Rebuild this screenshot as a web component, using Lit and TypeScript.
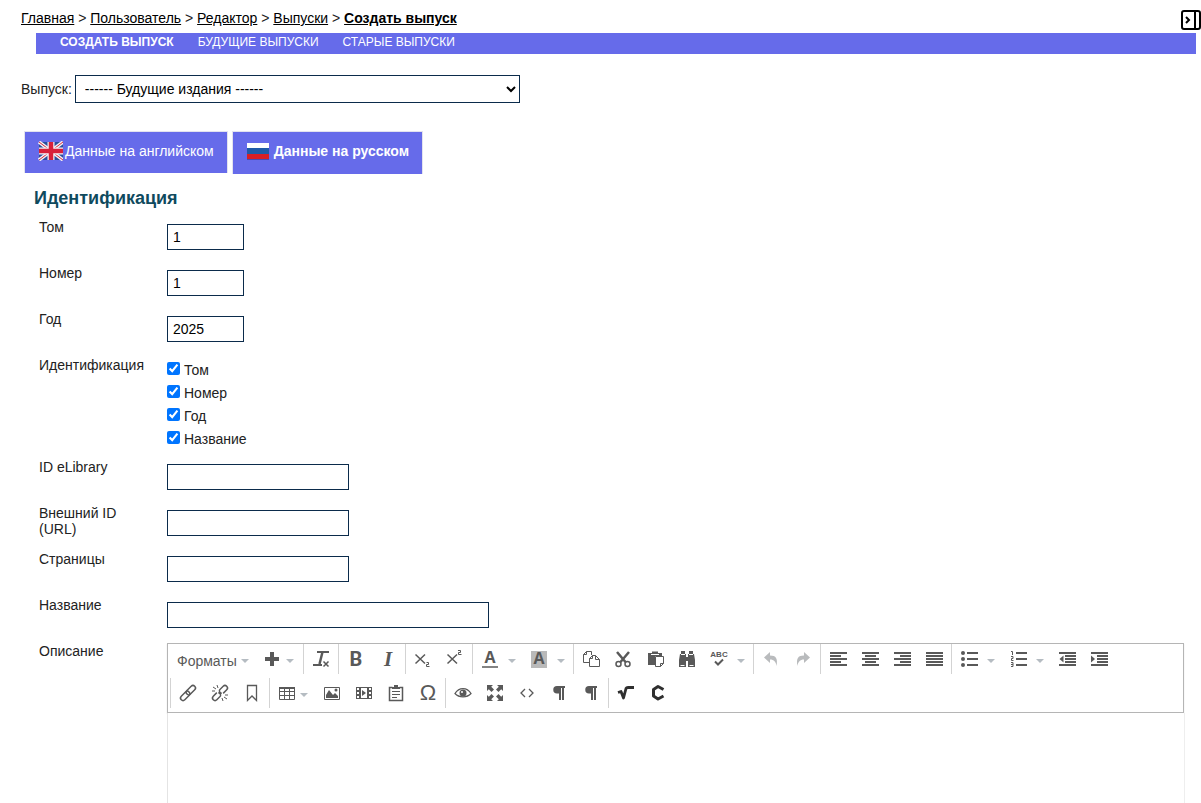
import { LitElement, html, svg, css, nothing } from "lit";
import type { SVGTemplateResult } from "lit";
import { customElement, property } from "lit/decorators.js";
import { classMap } from "lit/directives/class-map.js";

const bars = (rows: number[][]) =>
  rows.map(([x, y, w]) => svg`<rect x=${x} y=${y} width=${w} height="2" />`);

const PILCROW = svg`<path d="M7 2h8v2h-1v12h-2V4h-1v12H9V9.500H7A3.750 3.750 0 0 1 7 2z" />`;

// Every icon is drawn on an 18 × 18 grid.
const ICONS: Record<string, SVGTemplateResult> = {
  plus: svg`<path d="M7 2h4v5h5v4h-5v5H7v-5H2V7h5z" transform="translate(-1 0)" />`,
  clear: svg`<path d="M5 1h12v2H5z" /><path d="M10.500 2L7.500 14" class="s25" /><path d="M1 14h9v2H1z" /><path d="M11.500 11.500l5 5M16.500 11.500l-5 5" class="s15" />`,
  bold: svg`<text x="9" y="16" class="rb" text-anchor="middle">B</text>`,
  italic: svg`<text x="9" y="16" class="it" text-anchor="middle">I</text>`,
  sub: svg`<path d="M1.500 4.500l9.500 9M11 4.500l-9.500 9" class="s15" /><path d="M12.500 12.500h2v2h-2v2h3" class="s1" />`,
  sup: svg`<path d="M1.500 4.500l9.500 9M11 4.500l-9.500 9" class="s15" /><path d="M12 0.500h2.500v2h-2v2h3" class="s1" />`,
  color: svg`<text x="9" y="13" class="a" text-anchor="middle">A</text><rect x="1" y="16" width="16" height="2" opacity=".75" />`,
  back: svg`<rect x="1" y="1" width="16" height="17" fill="#b9b9b9" /><text x="9" y="14" class="a" text-anchor="middle">A</text>`,
  copy: svg`<path d="M7 12.500H1.500V4.500L4.500 1.500H9.500V5M1.500 4.500H4.500V1.500M7.500 8.500L10.500 5.500H13.500L17.500 9.500V16.500H7.500ZM7.500 8.500H10.500V5.500M13.500 5.500v4h4" class="s1" />`,
  cut: svg`<path d="M3 2l8.500 10M15 2L6.500 12" class="s25" /><circle cx="4.500" cy="14" r="2.500" class="s15" /><circle cx="13.500" cy="14" r="2.500" class="s15" />`,
  paste: svg`<path d="M2 3h4V1.500h6V3h4v3H9v9H2z" /><path d="M5 4.500h8" stroke="#fff" /><path d="M9.500 6.500h8v7l-3 3h-5zM14.500 16.500v-3h3" fill="#fff" stroke="#595959" />`,
  find: svg`<path d="M3 1h4v3h1v3h2V4h1V1h4v3h1l1 6v7h-7v-6H8v6H1v-7l1-6h1z" /><path d="M2.500 15.500h4M11.500 15.500h4M3 4.500h4M11 4.500h4" stroke="#fff" />`,
  spell: svg`<text x="9" y="7" class="abc" text-anchor="middle">ABC</text><path d="M5 11.500l3 3 5-5" class="s2" />`,
  undo: svg`<path d="M2 7.500L8 2v3.500c6 0 8 3 6.500 10.500C14 12 12 9.500 8 9.500V13z" fill="#b9bbbd" />`,
  redo: svg`<path d="M16 7.500L10 2v3.500c-6 0-8 3-6.500 10.500C4 12 6 9.500 10 9.500V13z" fill="#b9bbbd" />`,
  left: svg`${bars([[1, 2, 17], [1, 5, 11], [1, 8, 17], [1, 11, 11], [1, 14, 17]])}`,
  center: svg`${bars([[1, 2, 17], [4, 5, 11], [1, 8, 17], [4, 11, 11], [1, 14, 17]])}`,
  right: svg`${bars([[1, 2, 17], [7, 5, 11], [1, 8, 17], [7, 11, 11], [1, 14, 17]])}`,
  justify: svg`${bars([[1, 2, 17], [1, 5, 17], [1, 8, 17], [1, 11, 17], [1, 14, 17]])}`,
  bullets: svg`${bars([[7, 2, 11], [7, 8, 11], [7, 14, 11]])}<circle cx="3" cy="3" r="2" /><circle cx="3" cy="9" r="2" /><circle cx="3" cy="15" r="2" />`,
  numbers: svg`${bars([[7, 2, 11], [7, 8, 11], [7, 14, 11]])}<path d="M2 1.500h1.500V5M2 6.500h2v2H2.500v2H4.500M2 12.500h2v4H2M2 14.500h2" class="s1" />`,
  outdent: svg`${bars([[1, 2, 17], [7, 5, 11], [7, 8, 11], [7, 11, 11], [1, 14, 17]])}<path d="M5.500 5.500v7L1.500 9z" />`,
  indent: svg`${bars([[1, 2, 17], [7, 5, 11], [7, 8, 11], [7, 11, 11], [1, 14, 17]])}<path d="M1 5.500v7L5 9z" />`,
  link: svg`<g transform="rotate(-45 9 9)"><rect x="-0.500" y="6.500" width="11" height="5" rx="2.500" class="s15" /><rect x="7.500" y="6.500" width="11" height="5" rx="2.500" class="s15" /></g>`,
  unlink: svg`<g transform="rotate(-45 9 9)"><path d="M7 6.500H2A2.500 2.500 0 0 0 2 11.500H7A2.500 2.500 0 0 0 8 7.500M11 11.500h5A2.500 2.500 0 0 0 16 6.500H11A2.500 2.500 0 0 0 10 10.500" class="s15" /></g><path d="M2 3l3 2M6 1l1 3M1 7h3M16 15l-3-2M12 17l-1-3M17 11h-3" class="s1" />`,
  bookmark: svg`<path d="M4.500 1.500h9v15L9 12l-4.500 4.500z" class="s13" />`,
  table: svg`<path d="M1.500 3.500h15v12h-15zM1.500 7.500h15M1.500 11.500h15M6.500 3.500v12M11.500 3.500v12" class="s1" /><rect x="1" y="3" width="16" height="2" />`,
  image: svg`<path d="M1.500 3.500h15v12h-15z" class="s1" /><path d="M3 14v-3l3-5 4 5 2-2 3 3v2z" /><circle cx="13" cy="6" r="1.500" />`,
  media: svg`<path d="M1 3h16v12H1z" /><path d="M6 4h6v10H6z" fill="#fff" /><path d="M2 4h2v2H2zM2 8h2v2H2zM2 12h2v2H2zM14 4h2v2h-2zM14 8h2v2h-2zM14 12h2v2h-2z" fill="#fff" /><path d="M7 6v6l4-3z" />`,
  template: svg`<path d="M5.500 3.500h-3v13h13v-13h-3" class="s15" /><path d="M5 5V3h2V1h4v2h2v2zM5 7h8v1H5zM5 10h8v1H5zM5 13h5v1H5z" />`,
  omega: svg`<text x="9" y="16" class="om" text-anchor="middle">Ω</text>`,
  eye: svg`<path d="M1 9.500C5 3 13 3 17 9.500 13 14 5 14 1 9.500z" class="s13" /><circle cx="9" cy="9" r="3.500" /><circle cx="8" cy="8" r="1" fill="#fff" />`,
  full: svg`<path d="M1 1h6L5.200 2.800 8 5.500 5.500 8 2.800 5.200 1 7zM17 1v6l-1.800-1.800L12.500 8 10 5.500l2.800-2.700L11 1zM1 17v-6l1.800 1.800L5.500 10 8 12.500l-2.800 2.700L7 17zM17 17h-6l1.800-1.800L10 12.500l2.500-2.500 2.700 2.800L17 11z" />`,
  code: svg`<path d="M7 5L3 9l4 4M11 5l4 4-4 4" class="s13" />`,
  ltr: PILCROW,
  rtl: PILCROW,
  math: svg`<path d="M1 8.500l3-1L6.500 14 9 4.500Q9.500 3.500 11 3.500H17" fill="none" stroke="#2f2f2f" stroke-width="2.800" stroke-linejoin="round" />`,
  chem: svg`<path d="M14.500 5.500L9 2.500 4.500 5.500v6.500l4.500 3 5.500-3" fill="none" stroke="#2f2f2f" stroke-width="3" stroke-linejoin="round" />`,
};

interface Tool { icon: string; label: string; text?: string; menu?: boolean; wide?: boolean; disabled?: boolean }
const t = (icon: string, label: string, extra: Partial<Tool> = {}): Tool => ({ icon, label, ...extra });
const MENU = { menu: true };
const SPLIT = { menu: true, wide: true };
const OFF = { disabled: true };

const TOOLBARS: Tool[][][] = [
  [
    [t("", "Форматы", { text: "Форматы", menu: true }), t("plus", "Вставить", MENU)],
    [t("clear", "Очистить формат")],
    [t("bold", "Полужирный"), t("italic", "Курсив")],
    [t("sub", "Нижний индекс"), t("sup", "Верхний индекс")],
    [t("color", "Цвет текста", SPLIT), t("back", "Цвет фона", SPLIT)],
    [t("copy", "Копировать"), t("cut", "Вырезать"), t("paste", "Вставить"), t("find", "Найти и заменить"), t("spell", "Проверка орфографии", SPLIT)],
    [t("undo", "Отменить", OFF), t("redo", "Вернуть", OFF)],
    [t("left", "По левому краю"), t("center", "По центру"), t("right", "По правому краю"), t("justify", "По ширине")],
    [t("bullets", "Маркированный список", SPLIT), t("numbers", "Нумерованный список", SPLIT), t("outdent", "Уменьшить отступ"), t("indent", "Увеличить отступ")],
  ],
  [
    [t("link", "Ссылка"), t("unlink", "Удалить ссылку"), t("bookmark", "Якорь")],
    [t("table", "Таблица", MENU), t("image", "Изображение"), t("media", "Видео"), t("template", "Шаблон"), t("omega", "Специальные символы")],
    [t("eye", "Предпросмотр"), t("full", "Полноэкранный режим"), t("code", "Исходный код"), t("ltr", "Слева направо"), t("rtl", "Справа налево")],
    [t("math", "Формула"), t("chem", "Химическая формула")],
  ],
];

@customElement("text-editor")
class TextEditor extends LitElement {
  static styles = css`
    :host { display: flex; flex-direction: column; box-sizing: border-box; font: 14px/16px "Liberation Sans", Arial, sans-serif; }
    .bar { border: 1px solid #b5b5b5; padding: 0 2px; background: #fff; box-shadow: 0 1px 1px #ddd; }
    .row { display: flex; padding-bottom: 4px; }
    .group { display: flex; height: 30px; padding: 0 1px; border-left: 1px solid #d3d3d3; }
    .group.open { border-color: transparent; }
    button { display: flex; align-items: center; width: 32px; height: 30px; margin: 0; padding: 0 7px; border: 0; background: none; color: #595959; font: inherit; gap: 4px; }
    button.menu { width: 45px; }
    button.split { width: 49px; gap: 9px; }
    button.word { width: 85px; padding: 4px 5px 0; gap: 4px; }
    .icon { flex: none; width: 18px; height: 18px; fill: #595959; overflow: visible; }
    .caret { flex: none; border: 4px solid transparent; border-top-color: #b5bcc2; border-bottom: 0; }
    .icon + .caret { margin-top: 4px; }
    .s1, .s13, .s15, .s2, .s25 { fill: none; stroke: #595959; stroke-width: 1; }
    .s13 { stroke-width: 1.3; }
    .s15 { stroke-width: 1.5; }
    .s2 { stroke-width: 2; }
    .s25 { stroke-width: 2.5; }
    .rb { font: bold 20px Roboto, sans-serif; }
    .it { font: italic bold 21px "Liberation Serif", serif; }
    .a { font: bold 16px "Open Sans", sans-serif; }
    .om { font: 22px "Liberation Sans", sans-serif; }
    .abc { font: bold 8px "Liberation Sans", sans-serif; }
    .area { flex: 1; min-height: 90px; box-sizing: border-box; border: 0; border-left: 1px solid #e4e4e4; resize: none; outline: 0; padding: 8px; font: inherit; background: #fff; box-shadow: 1px 0 0 #eee; }
  `;

  private tool(tool: Tool) {
    const word = !!tool.text;
    const cls = { menu: !!tool.menu, split: !!tool.wide, word };
    return html`<button type="button" class=${classMap(cls)} aria-label=${tool.label} ?disabled=${tool.disabled}>
      ${word ? tool.text : html`<svg class="icon" viewBox="0 0 18 18" aria-hidden="true">${ICONS[tool.icon]}</svg>`}
      ${tool.menu ? html`<span class="caret"></span>` : nothing}
    </button>`;
  }

  render() {
    return html`
      <div class="bar" role="toolbar" aria-label="Форматирование">
        ${TOOLBARS.map((row, r) => html`<div class="row">
          ${row.map((group, g) => html`<div class=${classMap({ group: true, open: r === 0 && g === 0 })}>${group.map((x) => this.tool(x))}</div>`)}
        </div>`)}
      </div>
      <textarea class="area" aria-label="Описание"></textarea>`;
  }
}

@customElement("form-row")
class FormRow extends LitElement {
  @property() label = "";
  @property() name = "";
  @property() value = "";
  @property() size = "medium";

  static styles = css`
    :host { display: grid; grid-template-columns: 112px 1fr; column-gap: 16px; min-height: 46px; font: 14px/16px "Liberation Sans", Arial, sans-serif; color: #222; }
    input { box-sizing: border-box; height: 26px; margin: 5px 0 0; padding: 1px 5px; border: 1px solid #0b2b4b; font: inherit; color: #000; background: #fff; }
    .small { width: 77px; }
    .medium { width: 182px; }
    .large { width: 322px; }
  `;

  render() {
    return html`<label for=${this.name}>${this.label}</label>
      <div><input id=${this.name} class=${this.size} type="text" .value=${this.value} /></div>`;
  }
}

@customElement("app-root")
class AppRoot extends LitElement {
  static styles = css`
    :host { display: flex; flex-direction: column; min-height: 100vh; box-sizing: border-box; background: #fff; color: #222; font: 14px/16px "Liberation Sans", Arial, sans-serif; }
    header { display: flex; justify-content: space-between; height: 33px; box-sizing: border-box; padding: 10px 0 0 21px; color: #222; }
    header a { color: #000; text-decoration: underline; }
    .current { font-weight: bold; }
    .panel { width: 20px; height: 20px; padding: 0; border: 0; background: none; }
    .panel svg { display: block; }
    nav.sub { display: flex; gap: 24px; height: 21px; box-sizing: border-box; margin: 0 5px 0 36px; padding: 1px 24px 0; background: #666bea; font-size: 12px; text-transform: uppercase; }
    nav.sub a { color: #fff; text-decoration: none; }
    .issue { display: flex; align-items: center; gap: 3px; padding: 21px 21px 0; }
    .issue select { width: 445px; height: 28px; padding: 0 0 0 5px; border: 1px solid #0b2b4b; border-radius: 0; background: #fff; color: #000; font: inherit; }
    .tabs { display: flex; align-items: flex-start; gap: 4px; padding: 28px 24px 0; }
    .tab { display: flex; align-items: center; gap: 2px; height: 42px; box-sizing: border-box; border: 1px solid #e3e3ee; border-bottom: 0; padding: 0 13px 4px; background: #666bea; color: #fff; font: inherit; }
    .tab.active { height: 43px; padding: 0 13px 5px 14px; font-weight: bold; }
    .tab svg { display: block; }
    form { flex: 1; display: flex; flex-direction: column; padding: 14px 17px 0 39px; }
    h3 { margin: 0 0 11px -5px; font-size: 18px; line-height: 20px; color: #0f4a5e; }
    .checks { display: grid; grid-template-columns: 112px 1fr; column-gap: 16px; border: 0; margin: 0; padding: 0 0 5px; }
    .list { display: flex; flex-direction: column; padding-top: 5px; }
    .list label { display: flex; align-items: flex-start; gap: 4px; height: 23px; }
    .list input { width: 13px; height: 13px; margin: 0; accent-color: #0075ff; }
    .about { flex: 1; display: grid; grid-template-columns: 112px minmax(0, 1fr); column-gap: 16px; }
  `;

  render() {
    return html`
      <header>
        <div>
          <a href="#home">Главная</a> &gt; <a href="#user">Пользователь</a> &gt; <a href="#editor">Редактор</a> &gt;
          <a href="#issues">Выпуски</a> &gt; <a class="current" href="#create">Создать выпуск</a>
        </div>
        <button class="panel" type="button" aria-label="Показать панель">
          <svg width="20" height="20" viewBox="0 0 20 20" fill="none" stroke="#000" stroke-width="2">
            <rect x="1" y="1" width="18" height="18" rx="2" /><path d="M14 1v18M5 7l3 3-3 3" />
          </svg>
        </button>
      </header>
      <nav class="sub">
        <a class="current" href="#create">Создать выпуск</a>
        <a href="#future">Будущие выпуски</a>
        <a href="#back">Старые выпуски</a>
      </nav>
      <div class="issue">
        <label for="issue">Выпуск:</label>
        <select id="issue"><option>------ Будущие издания ------</option></select>
      </div>
      <div class="tabs">
        <button class="tab" type="button">
          <svg width="25" height="20" viewBox="0 0 25 20">
            <rect width="24" height="18" x="1" y="1" fill="#2b4f9c" />
            <path d="M1 1l24 18M25 1L1 19" stroke="#f1f1f5" stroke-width="3.500" />
            <path d="M1 1l24 18M25 1L1 19" stroke="#d8283c" stroke-width="1" />
            <path d="M13 1v18M1 10h24" stroke="#f4f4f8" stroke-width="7" />
            <path d="M13 1v18M1 10h24" stroke="#d8203a" stroke-width="4.500" />
          </svg>
          <span>Данные на английском</span>
        </button>
        <button class="tab active" type="button">
          <svg width="25" height="20" viewBox="0 0 25 20">
            <rect x="0" y="2" width="22" height="5" fill="#fff" />
            <rect x="0" y="7" width="22" height="6" fill="#1f5ba8" />
            <rect x="0" y="13" width="22" height="5" fill="#d81f26" />
            <rect x="0" y="18" width="22" height="1" fill="#4a4bb0" />
          </svg>
          <span>Данные на русском</span>
        </button>
      </div>
      <form>
        <h3>Идентификация</h3>
        <form-row label="Том" name="volume" value="1" size="small"></form-row>
        <form-row label="Номер" name="number" value="1" size="small"></form-row>
        <form-row label="Год" name="year" value="2025" size="small"></form-row>
        <div class="checks" role="group" aria-labelledby="ident">
          <span id="ident">Идентификация</span>
          <div class="list">
            ${["Том", "Номер", "Год", "Название"].map((x) => html`<label><input type="checkbox" checked />${x}</label>`)}
          </div>
        </div>
        <form-row label="ID eLibrary" name="elibrary"></form-row>
        <form-row label="Внешний ID (URL)" name="external"></form-row>
        <form-row label="Страницы" name="pages"></form-row>
        <form-row label="Название" name="title" size="large"></form-row>
        <div class="about">
          <span>Описание</span>
          <text-editor></text-editor>
        </div>
      </form>
    `;
  }
}
